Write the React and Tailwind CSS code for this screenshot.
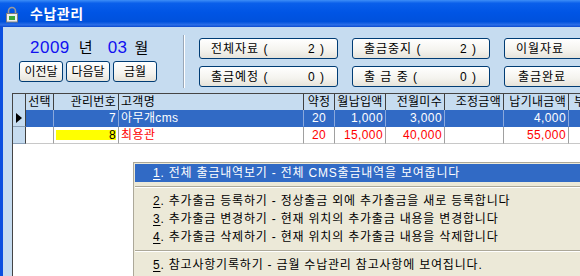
import React from "react";

const btn =
  "h-[21px] border border-[#003c74] rounded-[3px] bg-[linear-gradient(180deg,#ffffff_0%,#f4f3ee_60%,#e6e3da_100%)] flex items-center text-[12px] leading-none text-black";

function CountBtn({ label, n }) {
  return (
    <div className={btn + " justify-between pl-[11px] pr-[12px] tracking-[1px]"}>
      <span className="whitespace-pre">{label}</span>
      <span className="whitespace-pre">{n} )</span>
    </div>
  );
}

const cols =
  "grid grid-cols-[13px_28px_65px_185px_31px_51px_59px_59px_65px_120px]";

function HeadCell({ children, align = "center", className = "" }) {
  const a =
    align === "right"
      ? "justify-end pr-[2px]"
      : align === "left"
      ? "justify-start pl-[2px]"
      : "justify-center";
  return (
    <div
      className={
        "h-[16px] border-r border-[#404040] bg-[#c6dcf0] flex items-center text-[12px] leading-none text-black overflow-hidden whitespace-nowrap tracking-[0.3px] " +
        a +
        " " +
        className
      }
    >
      {children}
    </div>
  );
}

function Cell({ children, align = "right", sel, red, className = "" }) {
  const a =
    align === "right"
      ? "justify-end pr-[2px]"
      : align === "left"
      ? "justify-start pl-[2px]"
      : "justify-center";
  const colors = sel
    ? "bg-[#316ac5] text-white border-r-[#8aa8dc] border-b-[#316ac5]"
    : (red ? "text-[#ff0000] " : "text-black ") +
      "bg-white border-r-[#a0a0a0] border-b-[#c8c8c8]";
  return (
    <div
      className={
        "h-[17px] border-r border-b flex items-center text-[12px] leading-none overflow-hidden whitespace-nowrap tracking-[0.4px] " +
        a +
        " " +
        colors +
        " " +
        className
      }
    >
      {children}
    </div>
  );
}

function MenuItem({ num, text, active }) {
  return (
    <div
      className={
        "h-[18px] flex items-center pl-[18px] text-[12px] leading-none whitespace-nowrap tracking-[0.8px] " +
        (active ? "bg-[#316ac5] text-white" : "text-black")
      }
    >
      <span className="underline underline-offset-2">{num}</span>
      <span className="whitespace-pre">{". " + text}</span>
    </div>
  );
}

function MenuSep() {
  return (
    <div className="h-[10px] flex items-center">
      <div className="w-full h-[2px] border-t border-t-[#aca899] border-b border-b-white" />
    </div>
  );
}

export default function App() {
  return (
    <div className="w-[580px] h-[276px] overflow-hidden relative flex flex-col font-['Liberation_Sans','Noto_Sans_CJK_KR',sans-serif] text-[12px] bg-white">
      {/* Title bar */}
      <div className="h-[27px] shrink-0 flex items-center bg-[linear-gradient(180deg,#3d8ef7_0%,#0a5fea_12%,#0055e5_45%,#0051dc_80%,#2d6fe8_92%,#0a49cf_100%)]">
        <div className="ml-[5px] mt-[1px]">
          <svg width="14" height="17" viewBox="0 0 14 17">
            <path
              d="M3.5 7.5V5a3.5 3.5 0 0 1 7 0v2.5"
              stroke="#9a9a9a"
              strokeWidth="1.6"
              fill="none"
            />
            <rect x="1.5" y="7.5" width="11" height="8.5" fill="#eeeeee" stroke="#808080" />
            <rect x="4" y="10" width="6" height="4" fill="#3aa83a" />
          </svg>
        </div>
        <span className="ml-[11px] text-white font-bold text-[14px] leading-none tracking-[0.5px]">
          수납관리
        </span>
      </div>

      {/* Body */}
      <div className="flex-1 min-h-0 flex flex-col border-l-[3px] border-l-[#0b4fe0] bg-[#c6dcf0]">
        <div className="h-[66px] shrink-0 flex">
          {/* Left */}
          <div className="w-[180px] shrink-0 flex flex-col">
            <div className="mt-[10px] h-[20px] pl-[27px] flex items-center leading-none">
              <span className="text-[17px] text-[#1010f0] tracking-[0.5px]">2009</span>
              <span className="ml-[9px] text-[15px] text-black">년</span>
              <span className="ml-[15px] text-[17px] text-[#1010f0] tracking-[0.5px]">03</span>
              <span className="ml-[7px] text-[15px] text-black">월</span>
            </div>
            <div className="mt-[4px] pl-[16px] flex gap-[3px]">
              <div className={btn + " w-[44px] justify-center"}>이전달</div>
              <div className={btn + " w-[44px] justify-center"}>다음달</div>
              <div className={btn + " w-[44px] justify-center"}>금월</div>
            </div>
          </div>
          {/* separator */}
          <div className="mt-[8px] h-[53px] w-[2px] border-l border-l-[#9aa8b8] border-r border-r-white" />
          {/* Right */}
          <div className="pl-[14px] pt-[11px] grid grid-cols-[139px_138px_100px] gap-x-[14px] gap-y-[7px] content-start">
            <CountBtn label="전체자료 (" n="2" />
            <CountBtn label="출금중지 (" n="2" />
            <div className={btn + " pl-[11px] tracking-[1px]"}>이월자료</div>
            <CountBtn label="출금예정 (" n="0" />
            <CountBtn label="출 금 중 (" n="0" />
            <div className={btn + " pl-[13px] tracking-[1px]"}>출금완료</div>
          </div>
        </div>

        {/* Grid */}
        <div className="flex-1 min-h-0 ml-[9px] border-l border-t border-[#454545] bg-white overflow-hidden">
          <div className="w-max">
            <div className={cols}>
              <HeadCell />
              <HeadCell>선택</HeadCell>
              <HeadCell align="right">관리번호</HeadCell>
              <HeadCell align="left">고객명</HeadCell>
              <HeadCell>약정</HeadCell>
              <HeadCell>월납입액</HeadCell>
              <HeadCell align="right">전월미수</HeadCell>
              <HeadCell align="right">조정금액</HeadCell>
              <HeadCell align="right">납기내금액</HeadCell>
              <HeadCell align="left" className="pl-[5px]">부가금액</HeadCell>
            </div>
            <div className={cols}>
              <div className="h-[17px] border-r border-b border-r-[#404040] border-b-[#8aa0b8] bg-[#c6dcf0] flex items-center justify-center">
                <svg width="7" height="10" viewBox="0 0 7 10">
                  <path d="M0 0L6 5L0 10Z" fill="#000" />
                </svg>
              </div>
              <Cell sel />
              <Cell sel>7</Cell>
              <Cell sel align="left">아무개cms</Cell>
              <Cell sel align="center">20</Cell>
              <Cell sel>1,000</Cell>
              <Cell sel>3,000</Cell>
              <Cell sel></Cell>
              <Cell sel>4,000</Cell>
              <Cell sel></Cell>
            </div>
            <div className={cols}>
              <div className="h-[17px] border-r border-b border-r-[#404040] border-b-[#8aa0b8] bg-[#c6dcf0]" />
              <Cell />
              <Cell className="px-[2px] py-[3px]">
                <div className="w-full h-full bg-[#ffff00] flex items-center justify-end text-black">8</div>
              </Cell>
              <Cell red align="left">최용관</Cell>
              <Cell red align="center">20</Cell>
              <Cell red>15,000</Cell>
              <Cell red>40,000</Cell>
              <Cell red></Cell>
              <Cell red>55,000</Cell>
              <Cell red></Cell>
            </div>
          </div>
        </div>
      </div>

      {/* Context menu */}
      <div className="absolute left-[133px] top-[162px] w-[470px] h-[130px] bg-[#ece9d8] border border-[#aca899] p-[1px] shadow-[2px_2px_2px_rgba(0,0,0,0.25)]">
        <MenuItem num="1" text="전체 출금내역보기 - 전체 CMS출금내역을 보여줍니다" active />
        <MenuSep />
        <MenuItem num="2" text="추가출금 등록하기 - 정상출금 외에 추가출금을 새로 등록합니다" />
        <MenuItem num="3" text="추가출금 변경하기 - 현재 위치의 추가출금 내용을 변경합니다" />
        <MenuItem num="4" text="추가출금 삭제하기 - 현재 위치의 추가출금 내용을 삭제합니다" />
        <MenuSep />
        <MenuItem num="5" text="참고사항기록하기 - 금월 수납관리 참고사항에 보여집니다." />
      </div>
    </div>
  );
}
